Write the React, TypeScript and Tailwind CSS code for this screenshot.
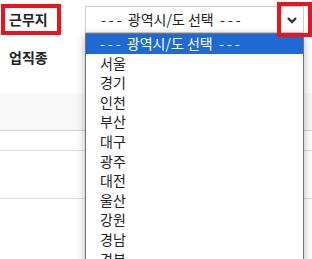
import React from "react";

const items = ["서울", "경기", "인천", "부산", "대구", "광주", "대전", "울산", "강원", "경남", "경북"];

function Placeholder() {
  return (
    <>
      <span className="tracking-[3px]">--</span>-  광역시/도 선택  <span className="tracking-[3px]">--</span>-
    </>
  );
}

export default function App() {
  const font = { fontFamily: '"Noto Sans CJK KR", "Noto Sans", sans-serif' };
  return (
    <div className="relative w-[312px] h-[259px] overflow-hidden bg-white text-[#222]" style={font}>
      <div className="flex items-start pt-[6px] h-[39px]">
        <div className="w-[85px] pl-[9px] leading-[27px] text-[14px] font-bold">근무지</div>
        <div className="relative w-[219px] h-[27px] border border-[#cfcfcf] bg-white pl-[15px] text-[14px] leading-[25px] text-[#222] whitespace-pre">
          <Placeholder />
          <svg className="absolute right-[5px] top-[9px]" width="12" height="8" viewBox="0 0 12 8">
            <polyline points="2,2 6,6 10,2" fill="none" stroke="#333" strokeWidth="2.4" />
          </svg>
        </div>
      </div>
      <div className="h-[36px] pl-[9px] leading-[36px] text-[14px] font-bold">업직종</div>
      <div className="h-[18px]" />
      <div className="h-[38px] bg-[#f8f8f8] border-b border-[#d4d4d4]" />
      <div className="h-[20px] border-b border-[#dcdcdc]" />
      <div className="h-[48px] border-b border-[#dcdcdc]" />

      <div className="absolute left-[85px] top-[33px] w-[219px] border border-[#767676] bg-white shadow-[0_2px_8px_rgba(0,0,0,0.3)] text-[14px] flex flex-col">
        <div className="h-[19.6px] leading-[19.6px] pl-[14px] bg-[#1e6ad2] text-white whitespace-pre"><Placeholder /></div>
        {items.map((it) => (
          <div key={it} className="h-[19.6px] leading-[19.6px] pl-[14px] text-[#222]">{it}</div>
        ))}
      </div>

      <div className="absolute left-[1px] top-[4px] w-[60px] h-[31px] border-4 border-[#e8141e]" />
      <div className="absolute left-[277px] top-[2px] w-[35px] h-[35px] border-4 border-[#e8141e]" />
    </div>
  );
}
